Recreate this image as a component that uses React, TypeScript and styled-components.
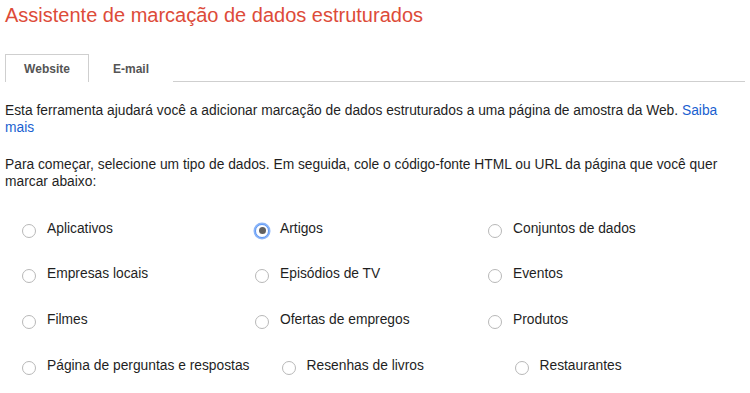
import React, { useState } from "react";
import styled, { createGlobalStyle } from "styled-components";

const Global = createGlobalStyle`
  html, body { margin: 0; padding: 0; background: #fff; }
  body { font-family: "Liberation Sans", Arial, sans-serif; color: #1f1f1f; }
`;

const Page = styled.div`
  padding: 3px 5px 0 5px;
`;

const Title = styled.h1`
  margin: 0;
  font-size: 20px;
  line-height: 24px;
  font-weight: normal;
  color: #dd4b39;
`;

const TabBar = styled.div`
  display: flex;
  margin-top: 27px;
  height: 27px;
  border-bottom: 1px solid #cfcfcf;
`;

const Tab = styled.div<{ $active?: boolean }>`
  width: 84px;
  box-sizing: border-box;
  height: 28px;
  display: flex;
  align-items: center;
  justify-content: center;
  font-size: 12px;
  font-weight: bold;
  color: #555;
  background: #fff;
  border: 1px solid ${(p) => (p.$active ? "#cfcfcf" : "transparent")};
  border-bottom: none;
  cursor: pointer;
`;

const Para = styled.p`
  margin: 20px 0 0 0;
  font-size: 13.8px;
  line-height: 17px;
`;

const Link = styled.a`
  color: #1a5fd0;
  text-decoration: none;
`;

const Options = styled.div`
  display: flex;
  flex-wrap: wrap;
  margin-top: 16px;
  margin-right: -5px;
  padding-left: 12px;
`;

const Option = styled.label`
  display: flex;
  align-items: center;
  min-width: 233px;
  height: 45.6px;
  box-sizing: border-box;
  padding-right: 27px;
  font-size: 13.8px;
  line-height: 16px;
  white-space: nowrap;
  cursor: pointer;
`;

const Radio = styled.span<{ $checked?: boolean }>`
  position: relative;
  flex: none;
  box-sizing: border-box;
  width: 14px;
  height: 14px;
  margin: 4px 11px 0 5px;
  border-radius: 50%;
  background: #fff;
  border: 1px solid ${(p) => (p.$checked ? "#5a95f5" : "#b8b8b8")};
  box-shadow: ${(p) => (p.$checked ? "0 0 0 1.5px #8ab4f8" : "none")};
  &::after {
    content: "";
    display: ${(p) => (p.$checked ? "block" : "none")};
    position: absolute;
    left: 2.5px;
    top: 2.5px;
    width: 7px;
    height: 7px;
    border-radius: 50%;
    background: #606060;
  }
`;

const items = [
  "Aplicativos",
  "Artigos",
  "Conjuntos de dados",
  "Empresas locais",
  "Episódios de TV",
  "Eventos",
  "Filmes",
  "Ofertas de empregos",
  "Produtos",
  "Página de perguntas e respostas",
  "Resenhas de livros",
  "Restaurantes",
];

export default function App() {
  const [sel, setSel] = useState("Artigos");
  const [tab, setTab] = useState("Website");
  return (
    <Page>
      <Global />
      <Title>Assistente de marcação de dados estruturados</Title>
      <TabBar>
        {["Website", "E-mail"].map((t) => (
          <Tab key={t} $active={tab === t} onClick={() => setTab(t)}>
            {t}
          </Tab>
        ))}
      </TabBar>
      <Para>
        Esta ferramenta ajudará você a adicionar marcação de dados estruturados a uma página de amostra da Web.{" "}
        <Link href="#">Saiba mais</Link>
      </Para>
      <Para>
        Para começar, selecione um tipo de dados. Em seguida, cole o código-fonte HTML ou URL da página que você quer
        marcar abaixo:
      </Para>
      <Options>
        {items.map((it) => (
          <Option key={it} onClick={() => setSel(it)}>
            <Radio $checked={sel === it} />
            {it}
          </Option>
        ))}
      </Options>
    </Page>
  );
}
